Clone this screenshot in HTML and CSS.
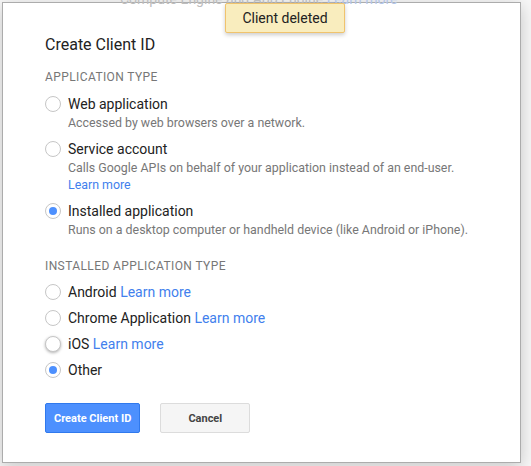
FILE: index.html
```html
<!DOCTYPE html>
<html lang="en">

<head>
  <meta charset="UTF-8">
  <meta name="viewport" content="width=device-width, initial-scale=1.0">
  <title>Create Client ID</title>
  <link rel="stylesheet" href="styles.css">
</head>

<body>
  <div class="page">
    <div class="backdrop-text">Compute Engine and App Engine <span class="faded-link">Learn more</span></div>

    <div class="dialog">
      <h2 class="dialog-title">Create Client ID</h2>

      <div class="section-label">Application type</div>
      <div class="option">
        <label class="radio-row"><input type="radio" name="apptype"> Web application</label>
        <div class="option-desc">Accessed by web browsers over a network.</div>
      </div>
      <div class="option">
        <label class="radio-row"><input type="radio" name="apptype"> Service account</label>
        <div class="option-desc">Calls Google APIs on behalf of your application instead of an end-user.<br><a href="#">Learn more</a></div>
      </div>
      <div class="option">
        <label class="radio-row"><input type="radio" name="apptype" checked> Installed application</label>
        <div class="option-desc">Runs on a desktop computer or handheld device (like Android or iPhone).</div>
      </div>

      <div class="section-label second">Installed application type</div>
      <div class="choice-list">
        <label class="radio-row"><input type="radio" name="installed"> Android&nbsp;<a href="#">Learn more</a></label>
        <label class="radio-row"><input type="radio" name="installed"> Chrome Application&nbsp;<a href="#">Learn more</a></label>
        <label class="radio-row"><input type="radio" name="installed" class="hovered"> iOS&nbsp;<a href="#">Learn more</a></label>
        <label class="radio-row"><input type="radio" name="installed" checked> Other</label>
      </div>

      <div class="actions">
        <button class="btn btn-primary">Create Client ID</button>
        <button class="btn">Cancel</button>
      </div>
    </div>

    <div class="toast">Client deleted</div>
  </div>
</body>

</html>
```

FILE: styles.css
```css
body,
html {
  margin: 0;
  height: 100%;
  font-family: Roboto, Arial, sans-serif;
}

body {
  background-color: #f7f7f7;
}

.page {
  position: relative;
  height: 100%;
  overflow: hidden;
}

.backdrop-text {
  position: absolute;
  top: -9px;
  left: 120px;
  font-size: 14px;
  color: #bdbdbd;
  z-index: 2;
  white-space: nowrap;
}

.backdrop-text .faded-link {
  color: #b3c6ea;
}

.dialog {
  margin: 2px 0 0 2px;
  width: 519px;
  height: 461px;
  box-sizing: border-box;
  padding: 32px 42px 0;
  background-color: #fff;
  border: 1px solid #acacac;
  box-shadow: 0 4px 16px rgba(0, 0, 0, 0.2);
}

.dialog-title {
  margin: 0;
  font-size: 16px;
  font-weight: normal;
  line-height: 20px;
  color: #222;
}

.section-label {
  margin-top: 14px;
  font-size: 12px;
  line-height: 16px;
  text-transform: uppercase;
  letter-spacing: 0.4px;
  color: #777;
}

.section-label.second {
  margin-top: 20px;
}

.option {
  margin-top: 8px;
}

.section-label + .option {
  margin-top: 9px;
}

.radio-row {
  display: flex;
  align-items: center;
  height: 20px;
  font-size: 14px;
  color: #222;
  cursor: pointer;
}

.radio-row input {
  appearance: none;
  -webkit-appearance: none;
  margin: 0 7px 0 0;
  width: 16px;
  height: 16px;
  flex: none;
  box-sizing: border-box;
  border: 1px solid #c6c6c6;
  border-radius: 50%;
  background-color: #fff;
  position: relative;
}

.radio-row input:checked::after {
  content: '';
  position: absolute;
  top: 3px;
  left: 3px;
  width: 8px;
  height: 8px;
  border-radius: 50%;
  background-color: #4d90fe;
}

.radio-row input.hovered {
  box-shadow: 0 1px 3px rgba(0, 0, 0, 0.3);
}

.option-desc {
  padding-left: 23px;
  font-size: 12.4px;
  line-height: 17px;
  color: #777;
  white-space: nowrap;
}

a {
  color: #427fed;
  text-decoration: none;
}

.choice-list {
  display: flex;
  flex-direction: column;
  gap: 6px;
  margin-top: 8px;
}

.actions {
  display: flex;
  gap: 20px;
  margin-top: 23px;
}

.btn {
  height: 30px;
  min-width: 90px;
  padding: 0 8px;
  box-sizing: border-box;
  font-family: Roboto, Arial, sans-serif;
  font-size: 11px;
  font-weight: bold;
  color: #444;
  background-color: #f5f5f5;
  border: 1px solid #dcdcdc;
  border-radius: 2px;
  cursor: pointer;
}

.btn-primary {
  min-width: 0;
  color: #fff;
  background-color: #4d90fe;
  border-color: #3079ed;
}

.toast {
  position: absolute;
  top: 3px;
  left: 225px;
  width: 120px;
  height: 30px;
  box-sizing: border-box;
  font-size: 14px;
  line-height: 28px;
  text-align: center;
  color: #222;
  background-color: #f9edbe;
  border: 1px solid #f0c36d;
  border-radius: 2px;
  box-shadow: 0 2px 4px rgba(0, 0, 0, 0.2);
  z-index: 3;
}
```
